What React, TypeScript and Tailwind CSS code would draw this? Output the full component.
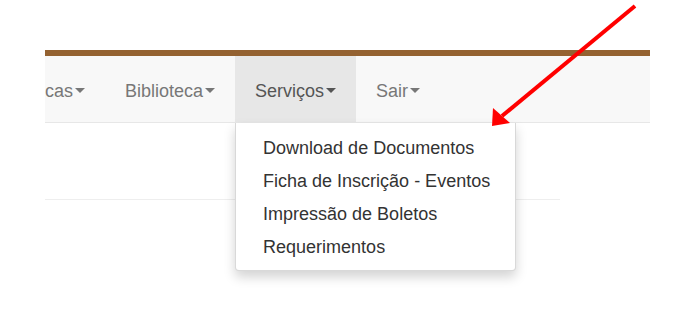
import React from "react";

function Caret() {
  return (
    <span className="inline-block w-0 h-0 ml-[2px] align-middle border-x-[5px] border-x-transparent border-t-[5px] border-t-current mb-[2px]" />
  );
}

export default function App() {
  const font = { fontFamily: '"Liberation Sans", Arial, sans-serif' };
  return (
    <div className="relative w-[686px] h-[319px] bg-white overflow-hidden" style={font}>
      <div className="ml-[45px] w-[605px] pt-[50px]">
        <div className="h-[6px] bg-[#946231]" />
        <div className="h-[67px] bg-[#f8f8f8] border-b border-[#e7e7e7] flex text-[18px] text-[#777]">
          <div className="flex items-center pt-[5px] pr-[20px]">
            <span>cas</span>
            <Caret />
          </div>
          <div className="flex items-center pt-[5px] px-[20px]">
            <span>Biblioteca</span>
            <Caret />
          </div>
          <div className="relative flex items-center pt-[5px] px-[20px] bg-[#e7e7e7] text-[#555]">
            <span>Serviços</span>
            <Caret />
            <div className="absolute left-0 top-[67px] w-[281px] bg-white border border-t-0 border-[rgba(0,0,0,0.15)] rounded-b-[4px] shadow-[0_6px_12px_rgba(0,0,0,0.175)] pt-[9px] pb-[6px] text-[#333] z-10">
              {[
                "Download de Documentos",
                "Ficha de Inscrição - Eventos",
                "Impressão de Boletos",
                "Requerimentos",
              ].map((t) => (
                <div key={t} className="h-[33px] leading-[33px] pl-[27px] whitespace-nowrap">
                  {t}
                </div>
              ))}
            </div>
          </div>
          <div className="flex items-center pt-[5px] px-[20px]">
            <span>Sair</span>
            <Caret />
          </div>
        </div>
        <div className="mt-[76px] w-[515px] h-px bg-[#eeeeee]" />
      </div>
      <svg className="absolute left-0 top-0 pointer-events-none z-20" width="686" height="319" viewBox="0 0 686 319">
        <line x1="635" y1="6" x2="502" y2="116" stroke="#ff0000" strokeWidth="4" />
        <polygon points="492,126 493,108 510,123" fill="#ff0000" />
      </svg>
    </div>
  );
}
